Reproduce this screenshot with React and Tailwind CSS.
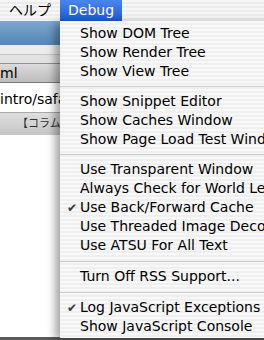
import React from "react";

const items = [
  { t: "Show DOM Tree" },
  { t: "Show Render Tree" },
  { t: "Show View Tree" },
  { sep: 11 },
  { t: "Show Snippet Editor" },
  { t: "Show Caches Window" },
  { t: "Show Page Load Test Window" },
  { sep: 11 },
  { t: "Use Transparent Window" },
  { t: "Always Check for World Leaks" },
  { t: "Use Back/Forward Cache", check: true },
  { t: "Use Threaded Image Decoding" },
  { t: "Use ATSU For All Text" },
  { sep: 12 },
  { t: "Turn Off RSS Support..." },
  { sep: 12 },
  { t: "Log JavaScript Exceptions", check: true },
  { t: "Show JavaScript Console" },
];

export default function App() {
  const font = { fontFamily: '"DejaVu Sans", "Noto Sans CJK JP", sans-serif' };
  return (
    <div
      className="relative w-[264px] h-[340px] overflow-hidden bg-white text-black"
      style={font}
    >
      {/* menu bar */}
      <div className="flex h-[21px] items-stretch bg-[repeating-linear-gradient(180deg,#f6f6f6_0px,#f6f6f6_2px,#ececec_2px,#ececec_4px)] text-[14px]">
        <div className="w-[60px] shrink-0 pl-[9px] leading-[21px] whitespace-nowrap">ヘルプ</div>
        <div className="w-[62px] shrink-0 pl-[8px] leading-[21px] text-white bg-gradient-to-b from-[#4a86ea] to-[#1c58d2]">
          Debug
        </div>
        <div className="flex-1" />
      </div>

      {/* underlying window */}
      <div className="flex flex-col">
        <div className="h-[24px] bg-gradient-to-b from-[#7ea7cf] to-[#5485b6]" />
        <div className="h-[9px] bg-[#ececec]" />
        <div className="h-px bg-[#c4c4c4]" />
        <div className="h-[8px] bg-[#e2e2e2]" />
        <div className="h-px bg-[#8e8e8e]" />
        <div className="h-[18px] bg-gradient-to-b from-[#dcdcdc] to-[#bcbcbc] text-[14px] leading-[18px]">
          ml
        </div>
        <div className="h-px bg-[#7a7a7a]" />
        <div className="h-[29px] bg-white text-[14px] leading-[18px] pt-[7px] whitespace-nowrap overflow-hidden">
          intro/safari-js.html
        </div>
        <div className="h-px bg-[#a8a8a8]" />
        <div className="h-[22px] bg-gradient-to-b from-[#dedede] to-[#c6c6c6] text-[11px] leading-[22px] text-[#333] pl-[17px] whitespace-nowrap overflow-hidden">
          【コラム】
        </div>
        <div className="h-[202px] bg-white" />
        <div className="h-[3px] bg-[#5a5a5a]" />
      </div>

      {/* dropdown menu */}
      <div className="absolute left-[60px] top-[21px] w-[240px] h-[317px] pt-[3px] bg-[repeating-linear-gradient(180deg,#f8f8f8_0px,#f8f8f8_2px,#efefef_2px,#efefef_4px)] shadow-[-5px_2px_8px_rgba(0,0,0,0.35)] text-[14px]">
        {items.map((it, i) =>
          it.sep ? (
            <div key={i} className="flex items-center" style={{ height: it.sep }}>
              <div className="h-px w-full bg-[#cdcdcd]" />
            </div>
          ) : (
            <div key={i} className="flex h-[19px] items-center whitespace-nowrap">
              <span className="w-[20px] shrink-0 pl-[7px] text-[12px] text-[#3a3a3a]">
                {it.check ? "✔" : ""}
              </span>
              <span className="shrink-0 leading-[19px]">{it.t}</span>
            </div>
          )
        )}
      </div>
    </div>
  );
}
